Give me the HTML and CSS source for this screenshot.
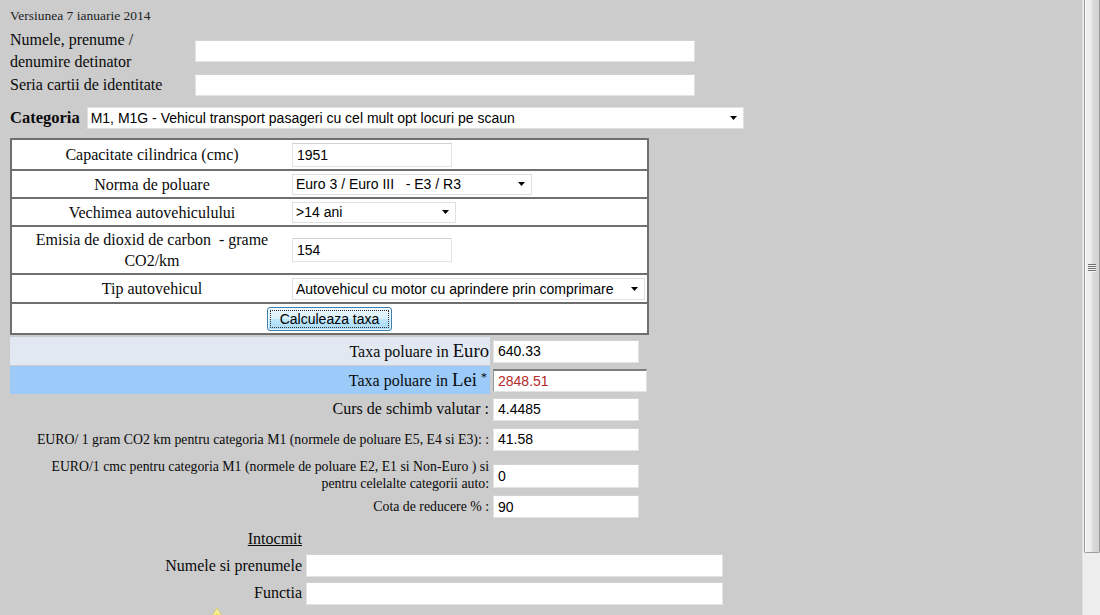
FILE: index.html
```html
<!DOCTYPE html>
<html lang="ro">
<head>
<meta charset="utf-8">
<title>Calcul taxa poluare</title>
<link rel="stylesheet" href="styles.css">
</head>
<body>
<div class="page">
  <div class="version">Versiunea 7 ianuarie 2014</div>

  <div class="owner">
    <div class="orow">
      <label class="olab">Numele, prenume /<br>denumire detinator</label>
      <input class="txt owide" type="text" value="">
    </div>
    <div class="orow orow2">
      <label class="olab">Seria cartii de identitate</label>
      <input class="txt owide" type="text" value="">
    </div>
  </div>

  <div class="catrow">
    <b class="catlab">Categoria</b>
    <select class="sel cat"><option>M1, M1G - Vehicul transport pasageri cu cel mult opt locuri pe scaun</option></select>
  </div>

  <div class="calc">
    <div class="crow r1">
      <div class="clab">Capacitate cilindrica (cmc)</div>
      <div class="cval"><input class="txt tin" type="text" value="1951"></div>
    </div>
    <div class="crow r2">
      <div class="clab">Norma de poluare</div>
      <div class="cval"><select class="sel snorm"><option>Euro 3 / Euro III&nbsp;&nbsp;&nbsp;- E3 / R3</option></select></div>
    </div>
    <div class="crow r3">
      <div class="clab">Vechimea autovehiculului</div>
      <div class="cval"><select class="sel svech"><option>&gt;14 ani</option></select></div>
    </div>
    <div class="crow r4">
      <div class="clab">Emisia de dioxid de carbon&nbsp; - grame CO2/km</div>
      <div class="cval"><input class="txt tin" type="text" value="154"></div>
    </div>
    <div class="crow r5">
      <div class="clab">Tip autovehicul</div>
      <div class="cval"><select class="sel stip"><option>Autovehicul cu motor cu aprindere prin comprimare</option></select></div>
    </div>
    <div class="crow r6">
      <button class="btn" type="button"><span class="btxt">Calculeaza taxa</span></button>
    </div>
  </div>

  <div class="results">
    <div class="rrow reuro">
      <div class="rlab bg1"><span class="big16">Taxa poluare in <span class="big">Euro</span></span></div>
      <div class="rval"><input class="txt rin" type="text" value="640.33"></div>
    </div>
    <div class="rrow rlei">
      <div class="rlab bg2"><span class="big16">Taxa poluare in <span class="big">Lei</span> <sup class="ast">*</sup></span></div>
      <div class="rval"><input class="txt rin lei" type="text" value="2848.51"></div>
    </div>
    <div class="rrow rcurs">
      <div class="rlab"><span class="big16">Curs de schimb valutar :</span></div>
      <div class="rval"><input class="txt rin" type="text" value="4.4485"></div>
    </div>
    <div class="rrow rgram">
      <div class="rlab"><span class="small">EURO/ 1 gram CO2 km pentru categoria M1 (normele de poluare E5, E4 si E3): :</span></div>
      <div class="rval"><input class="txt rin" type="text" value="41.58"></div>
    </div>
    <div class="rrow rcmc">
      <div class="rlab"><span class="small two">EURO/1 cmc pentru categoria M1 (normele de poluare E2, E1 si Non-Euro ) si pentru celelalte categorii auto:</span></div>
      <div class="rval"><input class="txt rin tall" type="text" value="0"></div>
    </div>
    <div class="rrow rcota">
      <div class="rlab"><span class="small">Cota de reducere % :</span></div>
      <div class="rval"><input class="txt rin" type="text" value="90"></div>
    </div>
  </div>

  <div class="sign">
    <div class="srow stitle"><div class="slab"><u>Intocmit</u></div></div>
    <div class="srow sname">
      <div class="slab">Numele si prenumele</div>
      <div class="sval"><input class="txt sin" type="text" value=""></div>
    </div>
    <div class="srow sfunc">
      <div class="slab">Functia</div>
      <div class="sval"><input class="txt sin" type="text" value=""></div>
    </div>
    <div class="iconrow">
      <svg class="bulb" width="16" height="12" viewBox="0 0 16 12"><path d="M8 1 L13 9 L3 9 Z" fill="#f4ef9a" stroke="#d9cf6a" stroke-width="1"/><circle cx="8" cy="9" r="2.2" fill="#e8dc40"/></svg>
    </div>
  </div>
</div>

<div class="scrollbar">
  <div class="thumb"><span class="grip"><i></i><i></i><i></i><i></i></span></div>
</div>
</body>
</html>
```

FILE: styles.css
```css
* { box-sizing: border-box; }

html, body {
  margin: 0;
  padding: 0;
  height: 100%;
  overflow: hidden;
}

body {
  background: #cccccc;
  font-family: "Liberation Serif", "Times New Roman", serif;
  color: #0a0a0a;
}

.page {
  width: 1082px;
  padding: 8px 0 0 10px;
}

.version {
  font-size: 13.5px;
  line-height: 16px;
  height: 16px;
  color: #222;
}

/* inputs */
.txt {
  font-family: "Liberation Sans", Arial, sans-serif;
  font-size: 14px;
  color: #000;
  background: #fff;
  border: 1px solid #e3e3e3;
  border-top-color: #d2d2d2;
  padding: 0 0 0 4px;
  margin: 0;
  height: 22px;
  outline: none;
  display: block;
}

.sel {
  -webkit-appearance: none;
  appearance: none;
  font-family: "Liberation Sans", Arial, sans-serif;
  font-size: 14px;
  color: #000;
  background: #fff url("data:image/svg+xml,%3Csvg xmlns='http://www.w3.org/2000/svg' width='7' height='4'%3E%3Cpath d='M0 0h7L3.5 4z' fill='%23000'/%3E%3C/svg%3E") no-repeat right 6px center;
  border: 1px solid #e0e0e0;
  border-radius: 0;
  padding: 0 18px 0 3px;
  margin: 0;
  height: 22px;
  outline: none;
  display: block;
}

/* owner rows */
.owner { margin-top: 5px; }

.orow {
  display: flex;
  align-items: center;
}

.olab {
  width: 185px;
  font-size: 16px;
  line-height: 22px;
}

.orow2 .olab { line-height: 23px; }

.owide { width: 500px; }

/* category */
.catrow {
  display: flex;
  align-items: center;
  gap: 7px;
  margin-top: 11px;
}

.catlab {
  font-size: 16.5px;
  font-weight: bold;
}

.cat { width: 657px; }

/* calc table */
.calc {
  width: 639px;
  margin-top: 9px;
  border: 2px solid #6f6f6f;
  background: #fff;
}

.crow {
  display: flex;
  align-items: center;
  border-top: 2px solid #6f6f6f;
}

.crow.r1 { border-top: 0; height: 29px; }
.crow.r2 { height: 28px; }
.crow.r3 { height: 28px; }
.crow.r4 { height: 48px; }
.crow.r5 { height: 29px; }
.crow.r6 { height: 31px; justify-content: center; }

.clab {
  width: 280px;
  text-align: center;
  font-size: 16px;
  line-height: 21px;
  padding: 0 4px;
}

.tin { width: 160px; height: 24px; }
.snorm { width: 240px; height: 21px; }
.svech { width: 164px; height: 21px; }
.stip { width: 353px; height: 22px; }

.btn {
  width: 125px;
  height: 24px;
  padding: 2px;
  margin: 0;
  border: 1px solid #3c7fb1;
  border-radius: 3px;
  background: linear-gradient(#eaf6fd 0%, #d9f0fc 50%, #bee6fd 51%, #a7d9f5 100%);
  box-shadow: inset 0 0 0 1px rgba(255,255,255,0.7);
  font-family: "Liberation Sans", Arial, sans-serif;
  font-size: 14px;
  color: #000;
  display: flex;
  align-items: stretch;
}

.btxt {
  flex: 1;
  display: flex;
  align-items: center;
  justify-content: center;
  border: 1px dotted #333;
}

/* results */
.results { margin-top: 2px; }

.rrow {
  display: flex;
  align-items: center;
}

.rlab {
  width: 480px;
  align-self: stretch;
  display: flex;
  align-items: center;
  justify-content: flex-end;
  text-align: right;
  padding-right: 1px;
}

.rval { padding-left: 3px; }

.reuro { height: 28px; }
.rlei { height: 28px; margin-top: 1px; }
.rcurs { height: 30px; }
.rgram { height: 30px; }
.rcmc { height: 37px; }
.rcota { height: 31px; }

.bg1 { background: #e1e8f2; }
.bg2 { background: #9ccbfa; padding-right: 3px; }

.big16 { font-size: 16px; line-height: 20px; }
.big { font-size: 18.7px; }
.ast {
  font-size: 12px;
  vertical-align: top;
  position: relative;
  top: -3px;
}

.small {
  font-size: 13.8px;
  line-height: 17px;
}

.two {
  display: block;
  max-width: 446px;
  padding-top: 4px;
}

.rin { width: 146px; height: 23px; }
.rin.lei {
  width: 154px;
  color: #b42a2a;
  border: 1px solid #e3e3e3;
  border-top: 2px solid #7d7d7d;
  border-left: 1px solid #9a9a9a;
}
.rin.tall { height: 24px; margin-top: 6px; }

/* sign */
.sign { margin-top: 6px; }

.srow {
  display: flex;
  align-items: center;
}

.stitle { height: 22px; }
.sname { height: 27px; margin-top: 2px; }
.sfunc { height: 28px; }

.slab {
  width: 292px;
  text-align: right;
  font-size: 16px;
}

.sval { padding-left: 4px; }

.sin { width: 417px; height: 23px; }

.iconrow {
  padding-left: 199px;
  height: 12px;
}

.bulb { display: block; }

/* fake scrollbar */
.scrollbar {
  position: fixed;
  top: 0;
  right: 0;
  width: 18px;
  height: 615px;
  background: #ededed;
  border-left: 1px solid #e2e2e2;
}

.thumb {
  position: absolute;
  top: 0;
  left: 1px;
  width: 16px;
  height: 553px;
  border: 1px solid #9c9c9c;
  border-top: 0;
  border-radius: 0 0 2px 2px;
  background: linear-gradient(to right, #f3f3f3 0%, #ececec 45%, #d9d9d9 55%, #d2d2d2 100%);
  box-shadow: inset 1px 0 0 #fbfbfb;
}

.grip {
  position: absolute;
  top: 264px;
  left: 3px;
  width: 8px;
  display: flex;
  flex-direction: column;
  gap: 1px;
}

.grip i {
  display: block;
  height: 1px;
  background: #6f6f6f;
  box-shadow: 0 1px 0 #f5f5f5;
}
```
